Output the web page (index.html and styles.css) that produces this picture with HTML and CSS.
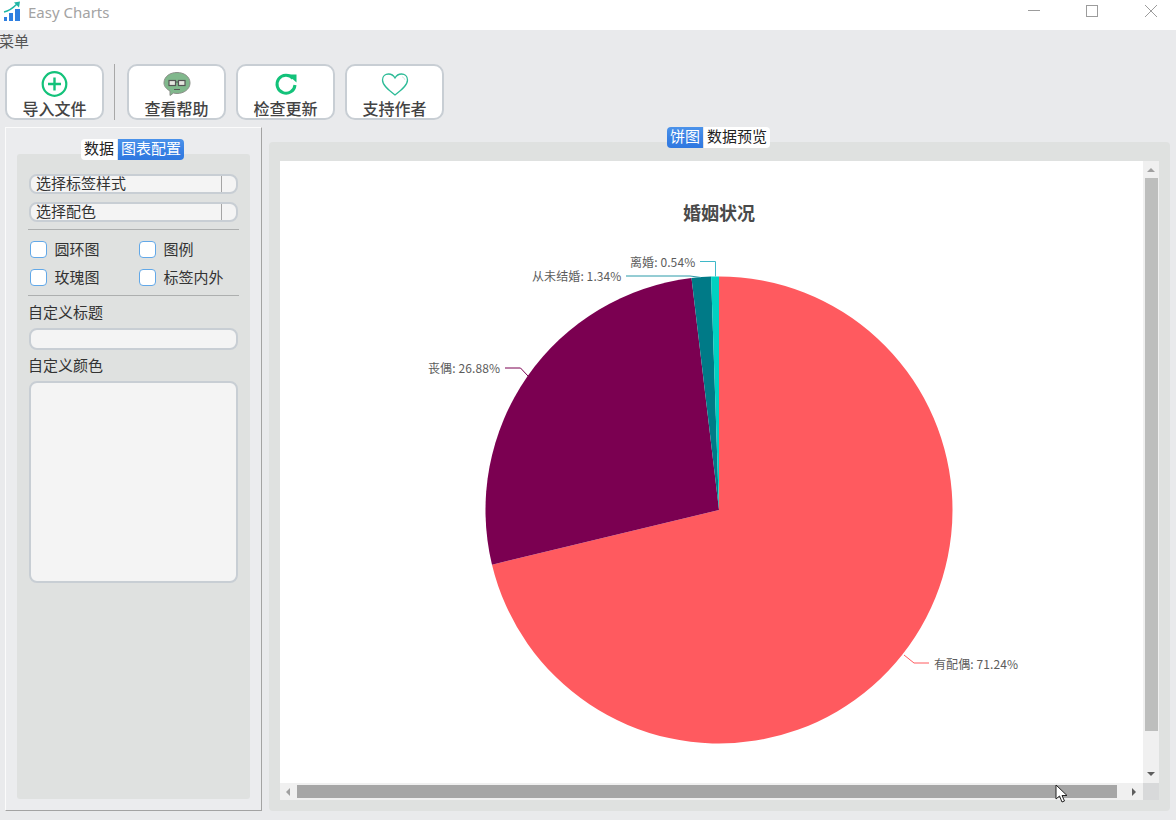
FILE: index.html
```html
<!DOCTYPE html>
<html lang="zh-CN">
<head>
  <meta charset="UTF-8" />
  <title>Easy Charts</title>
  <link rel="stylesheet" href="styles.css">
</head>
<body>
  <header class="titlebar">
    <svg class="app-icon" width="18" height="21" viewBox="0 0 18 21">
      <rect x="1" y="16" width="3" height="4" fill="#2f7fe0" />
      <rect x="6" y="12" width="4" height="8" fill="#2f7fe0" />
      <rect x="12" y="8" width="5" height="12" fill="#2f7fe0" />
      <path d="M1 11 C6 10 10 7 14 3" fill="none" stroke="#1fb6a6" stroke-width="1.6" />
      <path d="M11 1.5 L17 0.5 L16 6.5 Z" fill="#1fb6a6" />
    </svg>
    <span class="app-name">Easy Charts</span>
    <div class="win-controls">
      <svg width="14" height="14" viewBox="0 0 14 14"><path d="M0 6.5H12" stroke="#9c9c9c" fill="none" /></svg>
      <svg width="14" height="14" viewBox="0 0 14 14"><rect x="0.5" y="1.5" width="11" height="11" stroke="#9c9c9c" fill="none" /></svg>
      <svg width="14" height="14" viewBox="0 0 14 14"><path d="M1 1L13 13M13 1L1 13" stroke="#9c9c9c" fill="none" /></svg>
    </div>
  </header>

  <div class="menubar">菜单</div>

  <div class="toolbar">
    <button class="tool-btn">
      <svg width="28" height="28" viewBox="0 0 28 28">
        <circle cx="13.500" cy="14" r="11.800" fill="none" stroke="#13c27a" stroke-width="2.200" />
        <path d="M13.500 7.500V20.500M7 14H20" stroke="#13c27a" stroke-width="2.400" />
      </svg>
      导入文件
    </button>
    <div class="tool-sep"></div>
    <button class="tool-btn">
      <svg width="28" height="28" viewBox="0 0 28 28">
        <path d="M14 2.500C21 2.500 27 6.500 27 13C27 19 21 23.500 14 23.500C12.500 23.500 11.500 23.300 10.500 23L7 25.500L7 21C3.500 19 1 16.500 1 13C1 6.500 7 2.500 14 2.500Z" fill="#80b88c" stroke="#8a8f88" />
        <rect x="6" y="10.500" width="6.500" height="5" fill="#e6e6e0" stroke="#555" stroke-width="1.200" />
        <rect x="15.500" y="10.500" width="6.500" height="5" fill="#e6e6e0" stroke="#555" stroke-width="1.200" />
        <path d="M12.500 12H15.500M11 19.500H17" stroke="#555" fill="none" />
      </svg>
      查看帮助
    </button>
    <button class="tool-btn">
      <svg width="28" height="28" viewBox="0 0 28 28">
        <path d="M21 8.500A9 9 0 1 0 23 15" fill="none" stroke="#13c27a" stroke-width="3" />
        <path d="M15.500 4.500H24.500V12.500Z" fill="#13c27a" />
      </svg>
      检查更新
    </button>
    <button class="tool-btn">
      <svg width="28" height="28" viewBox="0 0 28 28">
        <path d="M14 25C8 20.500 1.500 15.500 1.500 10C1.500 6 4.500 4 7.500 4C10.500 4 12.800 5.800 14 8C15.200 5.800 17.500 4 20.500 4C23.500 4 26.500 6 26.500 10C26.500 15.500 20 20.500 14 25Z" fill="#fff" stroke="#2dbb97" stroke-width="1.300" />
        <path d="M21 6.800C22.500 7.300 23.500 8.300 23.800 9.800" fill="none" stroke="#cfe9e1" />
      </svg>
      支持作者
    </button>
  </div>

  <main class="content">
    <aside class="side-panel">
      <div class="tabs">
        <span class="tab">数据</span>
        <span class="tab active">图表配置</span>
      </div>
      <div class="side-pane">
        <div class="combo"><span class="combo-text">选择标签样式</span><span class="combo-arrow"></span></div>
        <div class="combo"><span class="combo-text">选择配色</span><span class="combo-arrow"></span></div>
        <hr class="divider" />
        <div class="check-grid">
          <label class="check"><span class="check-box"></span>圆环图</label>
          <label class="check"><span class="check-box"></span>图例</label>
          <label class="check"><span class="check-box"></span>玫瑰图</label>
          <label class="check"><span class="check-box"></span>标签内外</label>
        </div>
        <hr class="divider divider-low" />
        <div class="field-label">自定义标题</div>
        <div class="text-input"></div>
        <div class="field-label">自定义颜色</div>
        <div class="text-area"></div>
      </div>
    </aside>

    <section class="chart-panel">
      <div class="tabs">
        <span class="tab active">饼图</span>
        <span class="tab">数据预览</span>
      </div>
      <div class="chart-pane">
        <div class="scroll-view">
          <svg class="chart" width="863" height="622" viewBox="280 161 863 622">
            <text class="chart-title" x="719" y="212">婚姻状况</text>
            <path d="M719 510L719 276.500A233.500 233.500 0 1 1 492 564.700Z" fill="#ff5a5f" />
            <path d="M719 510L492 564.700A233.500 233.500 0 0 1 691.500 278.100Z" fill="#7b0051" />
            <path d="M719 510L691.500 278.100A233.500 233.500 0 0 1 711.100 276.600Z" fill="#007a87" />
            <path d="M719 510L711.100 276.600A233.500 233.500 0 0 1 719 276.500Z" fill="#00d1c1" />
            <path d="M904 655L914 663H929" class="leader" stroke="#ff5a5f" />
            <path d="M528 376L520.500 368H505" class="leader" stroke="#7b0051" />
            <path d="M701 277.500L690 276H626" class="leader" stroke="#2a9aa8" />
            <path d="M715.500 276.500V261.500H700" class="leader" stroke="#3fb8c8" />
            <text class="chart-label" x="934" y="663">有配偶: 71.24%</text>
            <text class="chart-label" x="428" y="367">丧偶: 26.88%</text>
            <text class="chart-label" x="532" y="275">从未结婚: 1.34%</text>
            <text class="chart-label" x="630" y="261">离婚: 0.54%</text>
          </svg>
          <div class="vscroll">
            <span class="arrow-up"></span>
            <div class="vthumb"></div>
            <span class="arrow-down"></span>
          </div>
          <div class="hscroll">
            <span class="arrow-left"></span>
            <div class="hthumb"></div>
            <span class="arrow-right"></span>
          </div>
          <div class="scroll-corner"></div>
        </div>
      </div>
    </section>
  </main>

  <svg class="cursor" width="14" height="20" viewBox="0 0 14 20">
    <path d="M1 1V15L4.500 12L7 18L9.500 17L7 11.500H12Z" fill="#fff" stroke="#222" />
  </svg>
</body>
</html>
```

FILE: styles.css
```css
* {
  box-sizing: border-box;
}
html,
body {
  margin: 0;
  height: 820px;
  overflow: hidden;
}
body {
  display: flex;
  flex-direction: column;
  position: relative;
  background-color: #e9eaec;
  font-family: "Noto Sans CJK SC", "Noto Sans", sans-serif;
  color: #333;
}

/* title bar */
.titlebar {
  display: flex;
  align-items: center;
  height: 30px;
  flex: none;
  padding-left: 3px;
  background-color: #fff;
}
.app-icon {
  flex: none;
  margin-bottom: 8px;
}
.app-name {
  margin-left: 7px;
  margin-bottom: 6px;
  font-family: "Noto Sans", sans-serif;
  font-size: 15px;
  color: #a3a3a3;
}
.win-controls {
  display: flex;
  gap: 44px;
  margin-left: auto;
  margin-right: 18px;
  margin-bottom: 8px;
}

/* menu */
.menubar {
  flex: none;
  height: 24px;
  margin-left: -1px;
  font-size: 15px;
  line-height: 22px;
  color: #555;
}

/* toolbar */
.toolbar {
  display: flex;
  flex: none;
  height: 56px;
  margin-top: 10px;
  padding-left: 5px;
  gap: 10px;
}
.tool-btn {
  display: flex;
  flex-direction: column;
  align-items: center;
  width: 99px;
  height: 56px;
  padding: 4px 0 0;
  background-color: #fff;
  border: 2px solid #c8ced4;
  border-radius: 10px;
  font-family: inherit;
  font-size: 16px;
  font-weight: 500;
  line-height: 20px;
  color: #444;
}
.tool-btn svg {
  display: block;
  flex: none;
}
.tool-sep {
  width: 1px;
  margin-right: 2px;
  background-color: #a8a8a8;
}

/* panels */
.content {
  display: flex;
  flex: 1;
  min-height: 0;
  margin-top: 7px;
  padding: 0 6px 9px 5px;
  gap: 7px;
}
.side-panel {
  display: flex;
  flex-direction: column;
  width: 257px;
  flex: none;
  padding: 11px;
  background-color: #ebecee;
  border: 1px solid;
  border-color: #fbfbfb #a3a3a3 #a3a3a3 #fbfbfb;
}
.tabs {
  display: flex;
  flex: none;
  justify-content: center;
  height: 21px;
  padding-right: 2px;
  position: relative;
  z-index: 1;
  margin-bottom: -6px;
  font-size: 15px;
  line-height: 18px;
  color: #222;
}
.tab {
  padding: 0 3px;
  background-color: #fff;
  margin-right: 1px;
}
.tab:first-child {
  border-radius: 4px 0 0 4px;
}
.tab:last-child {
  margin-right: 0;
  border-radius: 0 4px 4px 0;
}
.tab.active {
  background: linear-gradient(#4c93ea, #3a82e4 50%, #2f78e0);
  color: #fff;
}
.side-pane {
  flex: 1;
  padding: 20px 12px 0;
  background-color: #dfe1e0;
  border-radius: 3px;
}

/* form bits */
.combo {
  display: flex;
  height: 20px;
  margin-bottom: 8px;
  background-color: #f4f4f4;
  border: 2px solid #c8ced4;
  border-radius: 8px;
  font-size: 15px;
  line-height: 13px;
  color: #333;
}
.combo + .combo {
  margin-bottom: 7px;
}
.combo-text {
  flex: 1;
  padding-left: 5px;
}
.combo-arrow {
  width: 15px;
  border-left: 1px solid #a5a5a5;
}
.divider {
  height: 1px;
  margin: 0 -1px;
  border: 0;
  background-color: #adafaf;
}
.divider-low {
  margin-top: 9px;
}
.check-grid {
  display: grid;
  grid-template-columns: 109px 1fr;
  row-gap: 11px;
  padding: 11px 0 0 1px;
}
.check {
  display: flex;
  align-items: flex-start;
  height: 17px;
  font-size: 15px;
  line-height: 15px;
  color: #333;
}
.check-box {
  width: 17px;
  height: 17px;
  flex: none;
  margin-right: 7.500px;
  background-color: #fff;
  border: 1.500px solid #62a8e8;
  border-radius: 4px;
}
.field-label {
  height: 22px;
  margin-left: -1px;
  font-size: 15px;
  line-height: 22px;
  color: #333;
}
.divider-low + .field-label {
  margin-top: 5px;
}
.text-input {
  height: 22px;
  margin: 5px 0 4px;
  background-color: #f4f4f4;
  border: 2px solid #c8ced4;
  border-radius: 8px;
}
.text-area {
  height: 202px;
  margin-top: 5px;
  background-color: #f4f4f4;
  border: 2px solid #c8ced4;
  border-radius: 8px;
}

/* chart side */
.chart-panel {
  display: flex;
  flex-direction: column;
  flex: 1;
  min-width: 0;
}
.chart-pane {
  flex: 1;
  padding: 19px 11px 11px;
  background-color: #dfe1e0;
  border-radius: 4px;
}
.scroll-view {
  display: grid;
  grid-template-columns: 863px 16px;
  grid-template-rows: 622px 17px;
}
.chart {
  display: block;
  background-color: #fff;
}
.chart-title {
  font-size: 18px;
  font-weight: 700;
  fill: #4a4a4a;
  text-anchor: middle;
  dominant-baseline: central;
}
.chart-label {
  font-size: 12px;
  letter-spacing: 0.1px;
  fill: #5c5c5c;
  dominant-baseline: central;
}
.leader {
  fill: none;
  stroke-width: 1;
}

/* scrollbars */
.vscroll {
  display: flex;
  flex-direction: column;
  align-items: center;
  background-color: #f0f0f0;
}
.vthumb {
  width: 13px;
  height: 553px;
  margin-top: 6px;
  background-color: #bdbebd;
}
.arrow-up,
.arrow-down,
.arrow-left,
.arrow-right {
  width: 0;
  height: 0;
  flex: none;
  border: 4px solid transparent;
}
.arrow-up {
  margin-top: 7px;
  border-top-width: 0;
  border-bottom: 4px solid #a0a0a0;
}
.arrow-down {
  margin-top: 41px;
  border-bottom-width: 0;
  border-top: 4px solid #5e5e5e;
}
.hscroll {
  display: flex;
  align-items: center;
  padding-left: 6px;
  background-color: #f0f0f0;
}
.hthumb {
  width: 820px;
  height: 13px;
  margin-left: 7px;
  background-color: #a6a6a6;
}
.arrow-left {
  border-left-width: 0;
  border-right: 4px solid #a0a0a0;
}
.arrow-right {
  margin-left: 15px;
  border-right-width: 0;
  border-left: 4px solid #5e5e5e;
}
.scroll-corner {
  background-color: #d8d9da;
}

/* mouse pointer from the capture */
.cursor {
  position: absolute;
  left: 1055px;
  top: 784px;
}
```
